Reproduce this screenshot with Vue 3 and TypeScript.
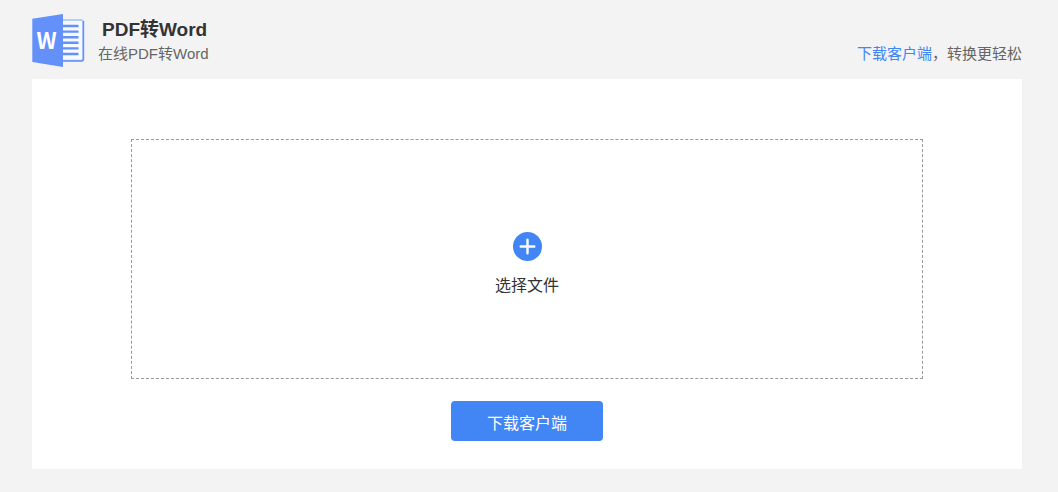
<script setup lang="ts">
import { ref } from 'vue'

const fileName = ref<string>('')

function onPick(event: Event): void {
  const input = event.target as HTMLInputElement
  fileName.value = input.files?.[0]?.name ?? ''
}
</script>

<template>
  <main class="page">
    <header class="header">
      <svg class="logo" viewBox="0 0 54 54" aria-hidden="true">
        <rect x="27" y="6" width="24" height="40.5" rx="2" fill="#f6f9ff" stroke="#a3c0fd" stroke-width="1.6" />
        <path d="M30 47H49.5Q51.5 47 51.5 45V7" fill="none" stroke="#6390f9" stroke-width="1.4" />
        <path
          d="M30 12H46.5M30 17.6H46.5M30 23.2H46.5M30 28.8H46.5M30 34.4H46.5M30 40H46.5"
          stroke="#6390f9"
          stroke-width="2.4"
        />
        <path d="M0.3 4.7L31 0V53L0.3 48Z" fill="#6390f9" />
        <text class="logo-letter" x="14.5" y="34.5" text-anchor="middle">W</text>
      </svg>
      <div class="titles">
        <h1 class="title">PDF转Word</h1>
        <p class="subtitle">在线PDF转Word</p>
      </div>
      <p class="promo"><a class="link" href="#download">下载客户端</a>，转换更轻松</p>
    </header>

    <section class="panel">
      <label class="dropzone">
        <input class="file" type="file" accept="application/pdf" @change="onPick" />
        <svg class="plus" viewBox="0 0 30 30" aria-hidden="true">
          <circle cx="15.5" cy="15.5" r="14.5" fill="#4285f4" />
          <path d="M15.5 8.7V22.3M8.7 15.5H22.3" stroke="#fff" stroke-width="2.4" stroke-linecap="round" />
        </svg>
        <span class="pick">{{ fileName || '选择文件' }}</span>
      </label>
      <button id="download" class="download" type="button">下载客户端</button>
    </section>
  </main>
</template>

<style>
body {
  background: #f3f3f3;
}
</style>

<style scoped>
.page {
  box-sizing: border-box;
  min-height: 100vh;
  padding: 14px 36px 23px 32px;
  background: #f3f3f3;
  color: #333;
  font-family: "Liberation Sans", "Noto Sans CJK SC", sans-serif;
}

.header {
  display: flex;
  align-items: flex-end;
  padding-bottom: 11px;
}

.logo {
  width: 54px;
  height: 54px;
  margin-right: 12px;
}

.logo-letter {
  fill: #fff;
  font-family: "Noto Sans CJK SC", sans-serif;
  font-size: 22px;
  font-weight: 700;
}

.titles {
  flex: 1;
}

.title {
  margin: 0 0 0 4px;
  font-size: 19px;
  line-height: 24px;
  font-weight: 700;
}

.subtitle,
.promo {
  margin: 0;
  padding-bottom: 2px;
  color: #666;
  font-size: 15px;
  line-height: 24px;
}

.link {
  color: #4285f4;
  text-decoration: none;
}

.panel {
  display: flex;
  flex-direction: column;
  align-items: center;
  gap: 22px;
  padding: 60px 0 28px;
  background: #fff;
}

.dropzone {
  position: relative;
  box-sizing: border-box;
  display: flex;
  flex-direction: column;
  align-items: center;
  gap: 12px;
  width: 80%;
  padding: 91px 0 80px;
  border: 1px dashed #999;
  cursor: pointer;
}

.file {
  position: absolute;
  inset: 0;
  width: 100%;
  height: 100%;
  opacity: 0;
  cursor: pointer;
}

.plus {
  width: 30px;
  height: 30px;
}

.pick {
  font-size: 16px;
  line-height: 25px;
}

.download {
  width: 152px;
  height: 40px;
  padding: 2px 0 0;
  border: 0;
  border-radius: 4px;
  background: #4285f4;
  color: #fff;
  font-family: inherit;
  font-size: 16px;
  cursor: pointer;
}
</style>
